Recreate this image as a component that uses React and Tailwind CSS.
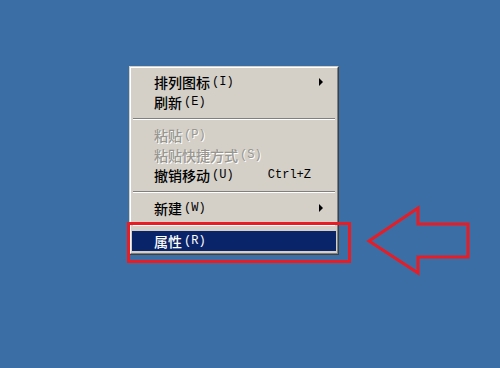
import React from 'react';

const items = [
  { label: '排列图标', key: 'I', submenu: true },
  { label: '刷新', key: 'E' },
  { sep: true },
  { label: '粘贴', key: 'P', disabled: true },
  { label: '粘贴快捷方式', key: 'S', disabled: true },
  { label: '撤销移动', key: 'U', shortcut: 'Ctrl+Z' },
  { sep: true },
  { label: '新建', key: 'W', submenu: true },
  { sep: true },
  { label: '属性', key: 'R', active: true },
];

function MenuRow({ item }) {
  if (item.sep) {
    return (
      <div className="h-[13px] flex flex-col justify-center px-[1px]">
        <div className="h-[1px] bg-[#808080]" />
        <div className="h-[1px] bg-white" />
      </div>
    );
  }

  // 禁用项：灰字 + 白色阴影
  const color = item.active
    ? 'bg-[#0a246a] text-white'
    : item.disabled
    ? 'text-[#98968f] [text-shadow:1px_1px_0_#ffffff]'
    : 'text-black';

  return (
    <div className={`h-[20px] flex items-center pl-[22px] pr-[10px] ${color}`}>
      <span className="text-[14px] leading-[20px] font-medium font-['Noto_Sans_CJK_SC',sans-serif]">
        {item.label}
      </span>
      <span className="ml-[2px] text-[12px] leading-[20px] font-['Liberation_Mono',monospace]">
        ({item.key})
      </span>
      <span className="flex-1" />
      {item.shortcut && (
        <span className="mr-[15px] text-[12px] leading-[20px] font-['Liberation_Mono',monospace]">
          {item.shortcut}
        </span>
      )}
      {item.submenu && (
        <svg width="5" height="8" viewBox="0 0 5 8" className="mr-[2px]">
          <path d="M0 0 L4 4 L0 8 Z" fill="#000" />
        </svg>
      )}
    </div>
  );
}

export default function App() {
  return (
    <div className="relative w-[500px] h-[368px] overflow-hidden bg-[#3a6ea5]">
      {/* 右键菜单 */}
      <div className="absolute left-[129px] top-[66px] w-[210px] border border-t-[#d4d0c8] border-l-[#d4d0c8] border-b-[#404040] border-r-[#404040]">
        <div className="border border-t-white border-l-white border-b-[#808080] border-r-[#808080] bg-[#d4d0c8] px-[1px] pt-[4px] pb-[2px]">
          {items.map((item, i) => (
            <MenuRow key={i} item={item} />
          ))}
        </div>
      </div>

      {/* 红框 */}
      <div className="absolute left-[127px] top-[222px] w-[224px] h-[41px] border-[3px] border-[#e81c24]" />

      {/* 红色箭头 */}
      <svg className="absolute left-0 top-0 pointer-events-none" width="500" height="368">
        <polygon
          points="369,241 418,208 418,224 468,224 468,257 418,257 418,273"
          fill="none"
          stroke="#e81c24"
          strokeWidth="3"
          strokeLinejoin="miter"
        />
      </svg>
    </div>
  );
}
